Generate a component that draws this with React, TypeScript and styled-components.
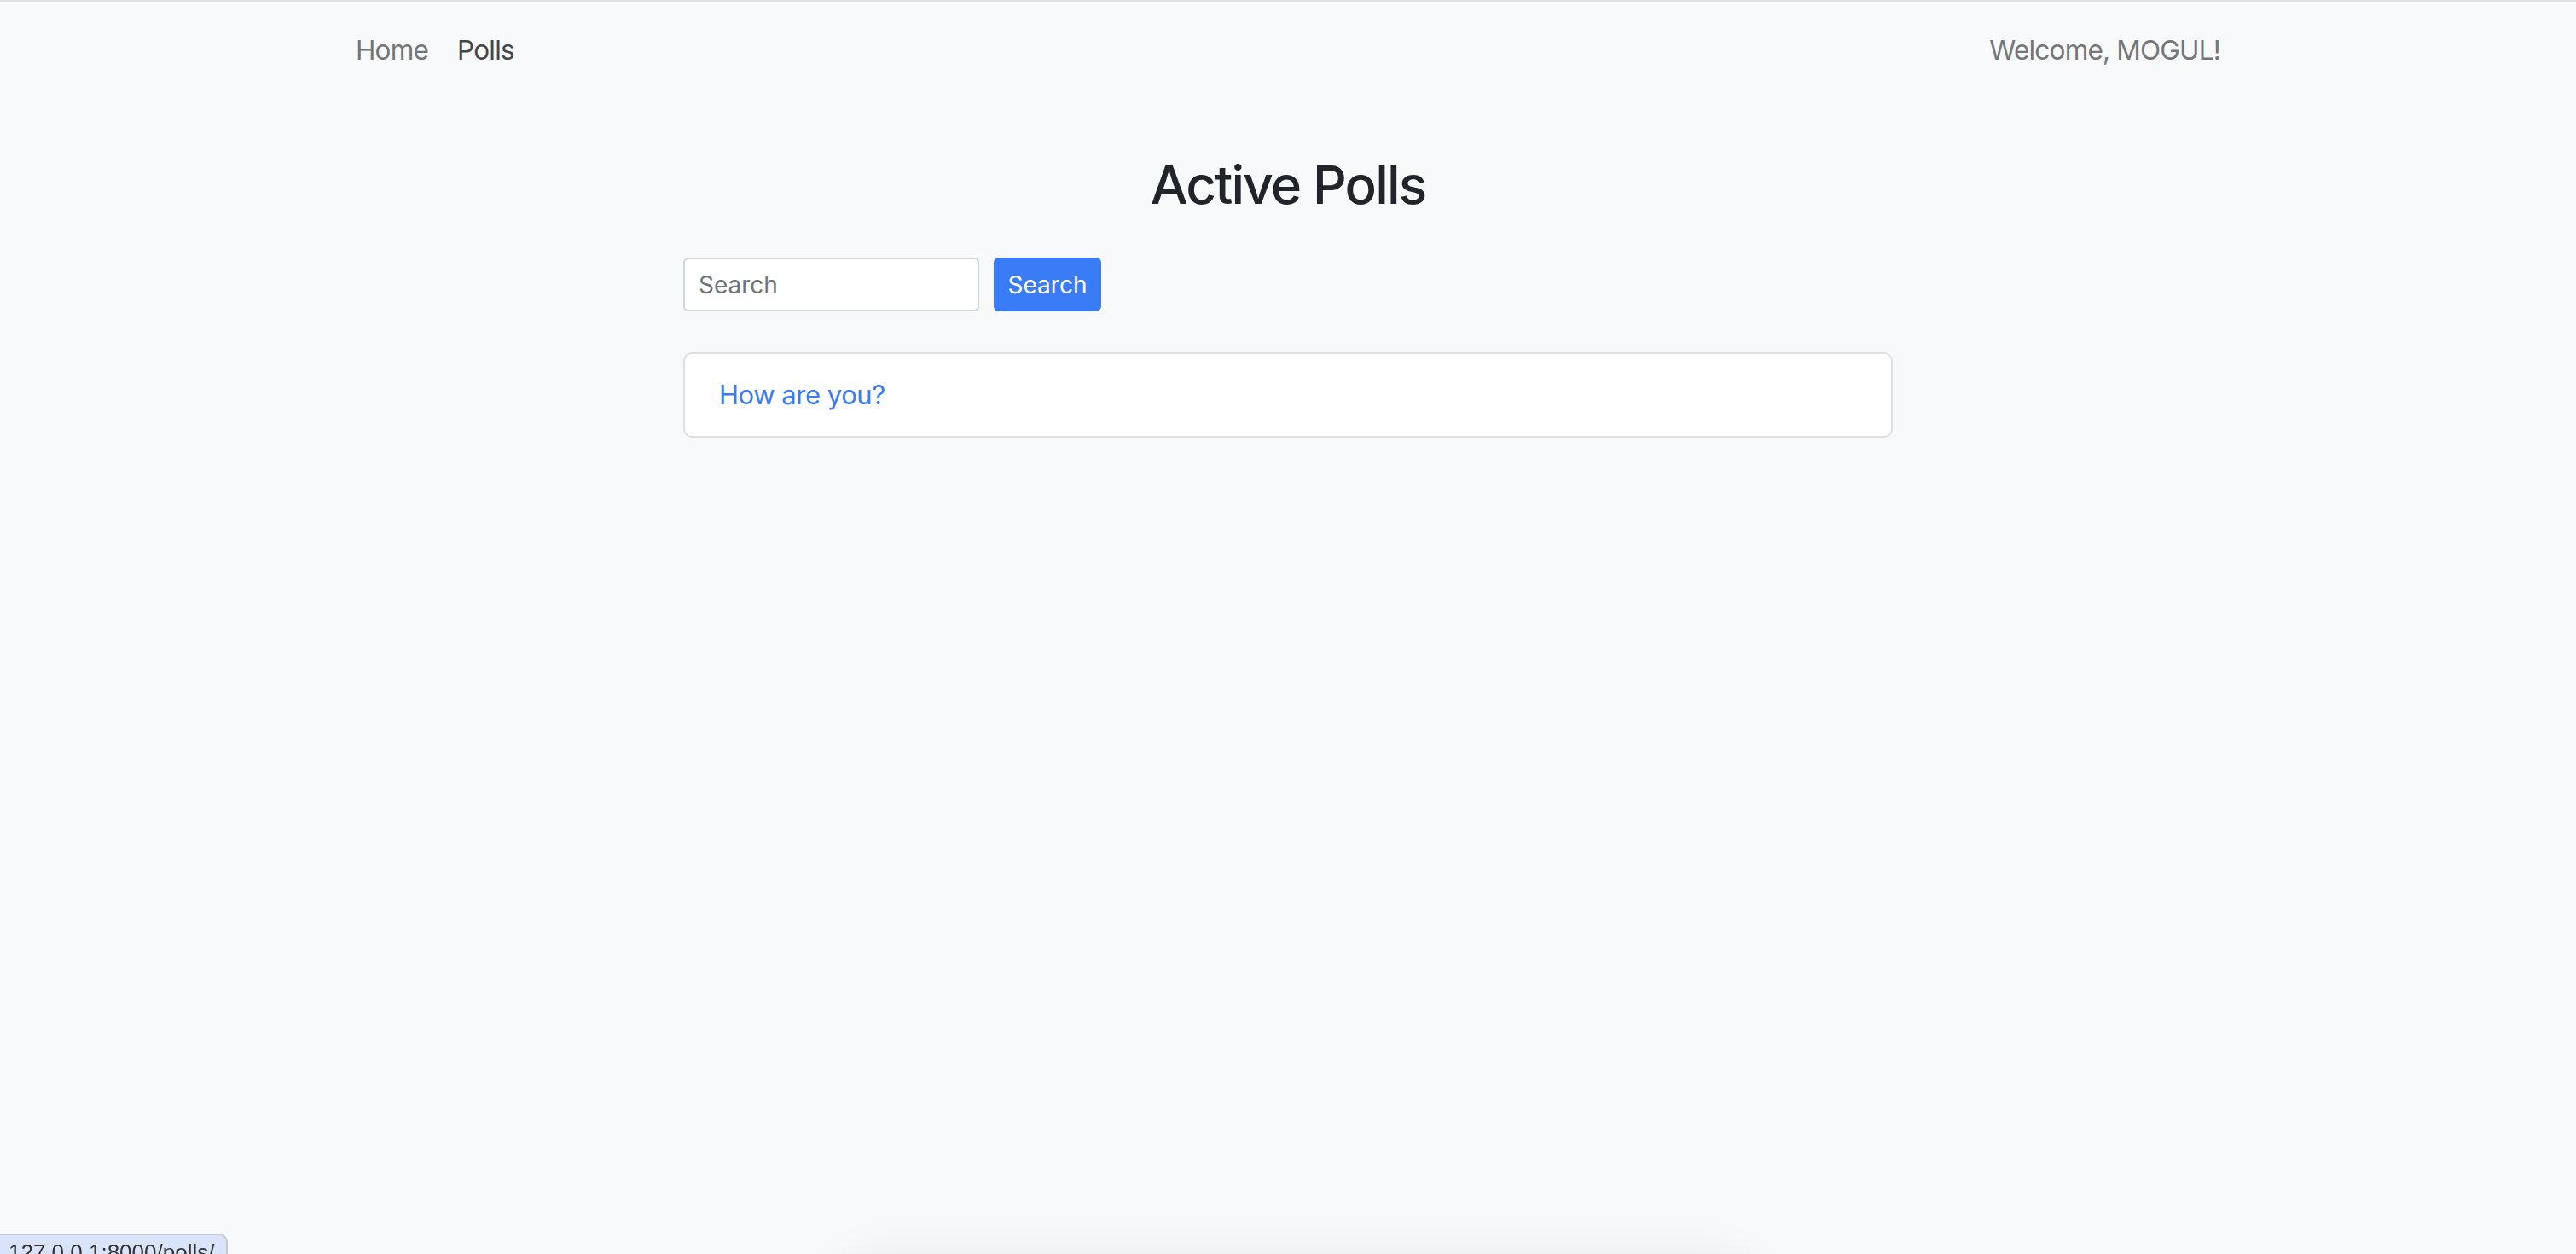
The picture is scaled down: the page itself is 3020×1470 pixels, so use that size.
import React from "react";
import styled, { createGlobalStyle } from "styled-components";

const GlobalStyle = createGlobalStyle`
  html, body {
    margin: 0;
    padding: 0;
    background: #f8f9fa;
    font-family: Inter, "Noto Sans", "Liberation Sans", sans-serif;
    color: #212529;
  }
  body {
    min-height: 1470px;
    overflow: hidden;
  }
`;

const Page = styled.div`
  min-height: 1470px;
  border-top: 2px solid #dfe0e2;
  box-sizing: border-box;
`;

const NavBar = styled.nav`
  display: flex;
  align-items: center;
  justify-content: space-between;
  width: 2186px;
  margin: 0 auto;
  height: 116px;
  box-sizing: border-box;
  padding-bottom: 2px;
`;

const NavLinks = styled.div`
  display: flex;
  align-items: center;
  gap: 34px;
`;

const NavLink = styled.a<{ $active?: boolean }>`
  font-size: 31.5px;
  line-height: 48px;
  letter-spacing: -0.025em;
  text-decoration: none;
  color: ${(p) => (p.$active ? "#464646" : "#757677")};
  cursor: pointer;
`;

const WelcomeText = styled.span`
  font-size: 31.5px;
  line-height: 48px;
  letter-spacing: -0.025em;
  color: #757677;
`;

const Main = styled.main`
  width: 1418px;
  margin: 0 auto;
  display: flex;
  flex-direction: column;
`;

const Title = styled.h2`
  margin: 61px 0 0;
  text-align: center;
  font-size: 62px;
  line-height: 76px;
  letter-spacing: -0.03em;
  font-weight: 500;
  color: #212529;
`;

const SearchForm = styled.form`
  display: flex;
  gap: 17px;
  margin-top: 47px;
`;

const SearchInput = styled.input`
  width: 347px;
  height: 63px;
  box-sizing: border-box;
  border: 2px solid #d1d4d8;
  border-radius: 6px;
  background: #ffffff;
  padding: 0 16px;
  font-family: inherit;
  font-size: 28px;
  color: #212529;
  outline: none;
  &::placeholder {
    color: #6c737b;
  }
`;

const SearchButton = styled.button`
  width: 126px;
  height: 63px;
  box-sizing: border-box;
  border: none;
  border-radius: 6px;
  background: #3a7bf6;
  color: #ffffff;
  font-family: inherit;
  font-size: 28px;
  padding: 0;
  cursor: pointer;
`;

const PollCard = styled.div`
  margin-top: 48px;
  height: 100px;
  box-sizing: border-box;
  background: #ffffff;
  border: 2px solid #dedfe0;
  border-radius: 10px;
  display: flex;
  align-items: center;
  padding: 0 40px;
`;

const PollLink = styled.a`
  font-size: 31px;
  line-height: 48px;
  letter-spacing: -0.015em;
  color: #3a7bf6;
  text-decoration: none;
`;

const StatusBar = styled.div`
  position: fixed;
  left: 0;
  bottom: -12px;
  height: 32px;
  padding: 0 14px 0 10px;
  background: #d9e4fb;
  border: 2px solid #c5c9d1;
  border-left: none;
  border-radius: 0 10px 0 0;
  font-family: "Liberation Sans", Arial, sans-serif;
  font-size: 26px;
  line-height: 40px;
  color: #333333;
  white-space: nowrap;
`;

const BottomShadow = styled.div`
  position: fixed;
  left: 1000px;
  bottom: -120px;
  width: 1040px;
  height: 100px;
  border-radius: 20px;
  background: #f8f9fa;
  box-shadow: 0 0 60px 10px rgba(0, 0, 0, 0.09);
`;

export default function App() {
  return (
    <>
      <GlobalStyle />
      <Page>
        <NavBar>
          <NavLinks>
            <NavLink href="#">Home</NavLink>
            <NavLink href="#" $active>
              Polls
            </NavLink>
          </NavLinks>
          <WelcomeText>Welcome, MOGUL!</WelcomeText>
        </NavBar>
        <Main>
          <Title>Active Polls</Title>
          <SearchForm onSubmit={(e) => e.preventDefault()}>
            <SearchInput placeholder="Search" />
            <SearchButton type="submit">Search</SearchButton>
          </SearchForm>
          <PollCard>
            <PollLink href="#">How are you?</PollLink>
          </PollCard>
        </Main>
      </Page>
      <BottomShadow />
      <StatusBar>127.0.0.1:8000/polls/</StatusBar>
    </>
  );
}
